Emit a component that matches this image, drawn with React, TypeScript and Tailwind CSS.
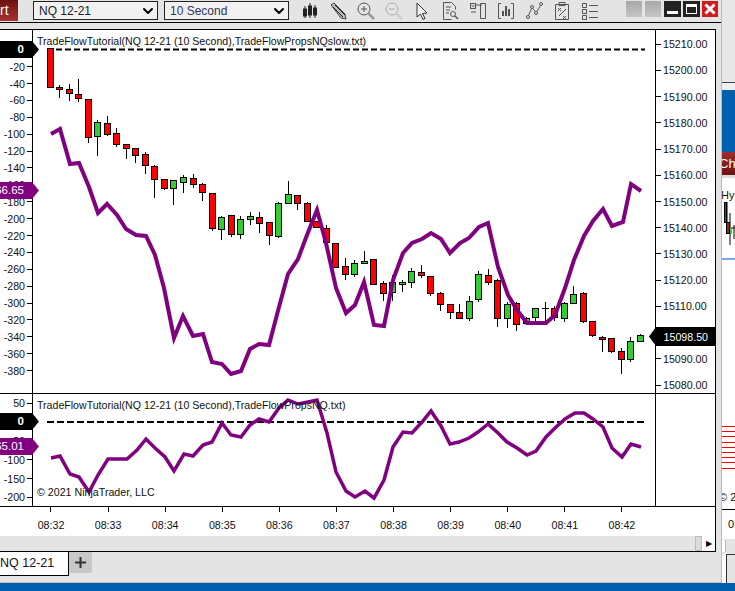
import type { ReactNode } from 'react';
import { ChevronDown } from 'lucide-react';

// [wickTop, bodyTop, bodyBottom, wickBottom, up]
const candles: [number, number, number, number, boolean][] = [
  [48, 48, 87, 87, false], [85, 87, 89, 98, false], [84, 89, 93, 101, false], [79, 94, 98, 102, false],
  [99, 99, 137, 143, false], [120, 122, 136, 156, true], [116, 123, 134, 136, false], [128, 133, 144, 147, false],
  [144, 144, 148, 159, false], [148, 148, 155, 163, false], [152, 154, 165, 174, false], [165, 166, 179, 198, false],
  [179, 179, 188, 190, false], [180, 180, 188, 205, true], [175, 177, 182, 193, true], [174, 178, 184, 188, false],
  [183, 184, 192, 201, false], [193, 193, 228, 231, false], [216, 217, 229, 240, true], [215, 215, 234, 237, false],
  [216, 219, 234, 239, true], [212, 216, 219, 225, true], [212, 217, 223, 233, false], [222, 222, 235, 245, false],
  [202, 203, 236, 238, true], [181, 194, 203, 204, true], [195, 195, 203, 210, false], [202, 203, 221, 222, false],
  [221, 221, 227, 228, false], [225, 228, 242, 243, false], [243, 243, 267, 268, false], [258, 266, 274, 280, false],
  [260, 263, 274, 277, true], [251, 261, 263, 264, true], [259, 259, 284, 284, false], [281, 283, 293, 301, false],
  [275, 282, 292, 301, true], [280, 282, 284, 292, true], [268, 271, 282, 288, true], [265, 272, 275, 278, false],
  [276, 276, 293, 296, false], [292, 293, 304, 311, false], [304, 304, 312, 319, false], [304, 312, 318, 318, false],
  [296, 301, 318, 321, true], [271, 274, 299, 302, true], [269, 275, 282, 285, false], [279, 280, 318, 327, false],
  [302, 304, 318, 328, true], [302, 303, 324, 331, false], [317, 318, 323, 325, true], [308, 308, 317, 325, true],
  [302, 308, 308, 321, true], [306, 308, 317, 321, false], [302, 303, 318, 322, true], [286, 294, 303, 304, true],
  [292, 293, 321, 323, false], [321, 321, 335, 337, false], [336, 337, 339, 352, false], [338, 338, 351, 353, false],
  [348, 351, 359, 374, false], [337, 341, 359, 362, true], [334, 335, 341, 341, true],
];

const slowLine =
  '51,134 60,129 70,164 79,163 89,187 98,213 107,204 117,215 126,229 136,235 146,236 155,255 164,288 174,338 183,316 193,336 203,334 212,362 222,364 231,374 241,371 250,349 259,344 269,345 279,307 288,274 298,259 307,235 317,210 326,243 336,288 346,313 355,305 364,282 374,325 384,326 393,280 403,253 412,243 422,239 431,233 441,239 450,253 460,243 469,238 479,227 488,223 498,267 508,295 517,310 527,323 537,323 546,323 555,315 565,288 574,260 584,236 593,221 603,209 612,226 623,222 631,184 641,191';

const fastLine =
  '51,458 60,456 70,474 79,477 89,492 98,475 108,459 117,459 127,459 137,450 146,439 155,448 165,457 174,471 184,454 193,456 203,445 212,442 222,423 231,435 241,437 250,425 259,419 269,422 279,408 288,400 298,404 308,402 317,400 327,433 336,472 346,491 355,497 365,491 374,498 384,480 393,447 403,432 412,433 422,422 431,411 441,426 450,444 459,442 469,438 478,432 488,424 498,433 507,442 517,448 527,455 536,451 546,437 555,428 565,419 575,413 584,413 593,419 603,427 612,448 622,457 631,444 641,447';

const priceLabels = ['15210.00', '15200.00', '15190.00', '15180.00', '15170.00', '15160.00', '15150.00', '15140.00', '15130.00', '15120.00', '15110.00', '15100.00', '15090.00', '15080.00'];
const leftLabels = ['0', '-20', '-40', '-60', '-80', '-100', '-120', '-140', '-160', '-180', '-200', '-220', '-240', '-260', '-280', '-300', '-320', '-340', '-360', '-380'];
const lowerLabels = ['50', '0', '-50', '-100', '-150', '-200'];
const times = ['08:32', '08:33', '08:34', '08:35', '08:36', '08:37', '08:38', '08:39', '08:40', '08:41', '08:42'];

function LeftMarker({ top, purple, children }: { top: string; purple?: boolean; children: ReactNode }) {
  return (
    <div
      className={`absolute left-0 w-[39px] h-[17px] flex items-center justify-end pr-[15px] text-white text-[11.5px] whitespace-nowrap [clip-path:polygon(0_0,32px_0,39px_50%,32px_100%,0_100%)] ${top} ${purple ? 'bg-[#800080]' : 'bg-black font-bold'}`}
    >
      {children}
    </div>
  );
}

function ToolIcon({ children }: { children: ReactNode }) {
  return (
    <div className="w-[28px] h-[22px] flex items-center justify-center shrink-0">
      <svg width="20" height="20" viewBox="0 0 20 20" fill="none" stroke="#555" strokeWidth="1">
        {children}
      </svg>
    </div>
  );
}

function Dropdown({ label, dark }: { label: string; dark?: boolean }) {
  return (
    <div className="w-[125px] h-[19px] border border-[#222] bg-[#f1f1f1] flex items-center justify-between pl-[5px] pr-[1px] shrink-0">
      <span className={`text-[12px] ${dark ? 'text-[#34345e]' : 'text-[#222]'}`}>{label}</span>
      <ChevronDown size={16} strokeWidth={3} className="text-black" />
    </div>
  );
}

function Toolbar() {
  return (
    <div className="h-[23px] border-b border-black flex items-start relative bg-[#e4e4e4]">
      <div className="w-[18px] h-[21px] bg-gradient-to-b from-[#6e1010] to-[#a83232] text-white text-[14px] leading-[21px] overflow-hidden shrink-0">
        rt
      </div>
      <div className="flex items-center gap-[6px] ml-[15px] mt-[1px]">
        <Dropdown label="NQ 12-21" />
        <Dropdown label="10 Second" dark />
      </div>
      <div className="flex ml-[7px]">
        <ToolIcon>
          <path d="M5 5v12M10 2v15M15 4v13" stroke="#222" />
          <rect x="3.5" y="8" width="3" height="7" fill="#222" stroke="#222" />
          <rect x="8.5" y="5" width="3" height="9" fill="#222" stroke="#222" />
          <rect x="13.5" y="7" width="3" height="7" fill="#222" stroke="#222" />
        </ToolIcon>
        <ToolIcon>
          <path d="M3 4l3-2 11 11 1 5-5-1z" fill="#bbb" stroke="#444" />
          <path d="M5 6l10 10M7 4l10 10" stroke="#222" />
        </ToolIcon>
        <ToolIcon>
          <circle cx="8" cy="8" r="6" />
          <path d="M5 8h6M8 5v6" />
          <path d="M12.5 12.5l5.5 5.5" stroke="#999" strokeWidth="2.5" />
        </ToolIcon>
        <ToolIcon>
          <circle cx="8" cy="8" r="6" stroke="#aaa" />
          <path d="M5 8h6" stroke="#aaa" />
          <path d="M12.5 12.5l5.5 5.5" stroke="#ccc" strokeWidth="2.5" />
        </ToolIcon>
        <ToolIcon>
          <path d="M5 2l0 14 3.5-3 2.5 5.5 2-1-2.5-5 4.5-.5z" stroke="#333" fill="#f4f4f4" />
        </ToolIcon>
        <ToolIcon>
          <path d="M3.5 1.5h8l4 4v3M3.5 1.5v17h8M6 6h5M6 9h4M6 12h3" />
          <circle cx="13" cy="13" r="2.5" />
          <path d="M15 15l3 3" strokeWidth="1.5" />
        </ToolIcon>
        <ToolIcon>
          <rect x="2.5" y="2.5" width="5" height="5" />
          <path d="M3.5 5h3M8 4h6M12.5 2.5h5v15h-5zM3 11h5" />
        </ToolIcon>
        <ToolIcon>
          <path d="M5 2.5H2.5v15H5M15 2.5h2.5v15H15" />
          <path d="M7 15v-5M10 15V5M13 15V8" strokeWidth="1.5" stroke="#222" />
        </ToolIcon>
        <ToolIcon>
          <circle cx="4" cy="16" r="1.5" />
          <circle cx="8" cy="6" r="1.5" />
          <circle cx="12" cy="12" r="1.5" />
          <circle cx="17" cy="3" r="1.5" />
          <path d="M4.5 14.5L7.5 7.5M9 7.5l2 3M13 10.5l3.5-6" />
        </ToolIcon>
        <ToolIcon>
          <path d="M3.5 3.5h13v15h-13zM7 1.5h6v3H7z" />
          <path d="M6 7l3 3M9 7l-3 3M11 15l3 3M14 15l-3 3M7 15l7-7" />
        </ToolIcon>
        <ToolIcon>
          <path d="M2.5 2.5h4v4h-4zM2.5 8.5h4v4h-4zM2.5 14.5h4v4h-4zM9 4.5h9M9 10.5h9M9 16.5h9" />
        </ToolIcon>
      </div>
      <div className="flex items-center gap-[2px] ml-auto mr-[3px] mt-[1px]">
        <div className="w-[16px] h-[16px] bg-gradient-to-b from-[#a8a8a8] to-[#c4c4c4] mr-[1px]" />
        <div className="w-[16px] h-[16px] bg-gradient-to-b from-[#a8a8a8] to-[#c4c4c4] mr-[1px]" />
        <div className="w-[17px] h-[16px] bg-[#222] flex items-end justify-center pb-[3px]">
          <div className="w-[11px] h-[3px] bg-white" />
        </div>
        <div className="w-[17px] h-[16px] bg-[#222] flex items-center justify-center">
          <div className="w-[11px] h-[10px] border border-white border-t-[3px]" />
        </div>
        <div className="w-[16px] h-[16px] bg-[#d01c1c] flex items-center justify-center">
          <svg width="12" height="12" viewBox="0 0 12 12" stroke="white" strokeWidth="3">
            <path d="M1.5 1.5l9 9M10.5 1.5l-9 9" />
          </svg>
        </div>
      </div>
    </div>
  );
}

function Candles() {
  return (
    <>
      {candles.map(([wt, top, bot, wb, up], i) => {
        const c = Math.floor(50.2 + 9.52 * i);
        if (top === bot) {
          return <path key={i} d={`M${c + 0.5} ${wt}V${wb}M${c - 3} ${top + 0.5}H${c + 4}`} stroke="black" fill="none" />;
        }
        return (
          <g key={i}>
            <path d={`M${c + 0.5} ${wt}V${wb}`} stroke="black" />
            <rect x={c - 2.5} y={top + 0.5} width={6} height={bot - top} fill={up ? '#32cd32' : '#ff0000'} stroke="black" />
          </g>
        );
      })}
    </>
  );
}

function TopPanel() {
  return (
    <div className="h-[364px] flex relative border-b border-black">
      <div className="w-[33px] border-r border-black shrink-0 pt-[11.3px] text-[10.67px] text-[#111]">
        {leftLabels.map((l) => (
          <div key={l} className="h-[16.9px] flex items-center justify-end">
            <span className="mr-[2px]">{l === '0' ? '' : l}</span>
            <div className="w-[5px] h-px bg-black" />
          </div>
        ))}
      </div>
      <div className="relative w-[622px] h-full overflow-hidden">
        <svg width="622" height="363" viewBox="33 30 622 363" className="block">
          <path d="M47 49.5H645" stroke="black" strokeWidth="2" strokeDasharray="6 3" />
          <Candles />
          <polyline points={slowLine} fill="none" stroke="#800080" strokeWidth="4" strokeLinejoin="miter" />
        </svg>
        <div className="absolute left-[4px] top-[4px] text-[10.6px] leading-[14px] text-[#111] whitespace-nowrap">
          TradeFlowTutorial(NQ 12-21 (10 Second),TradeFlowPropsNQslow.txt)
        </div>
      </div>
      <div className="flex-1 border-l border-black pt-[1.1px] text-[10.67px] text-[#111]">
        {priceLabels.map((p) => (
          <div key={p} className="h-[26.23px] flex items-center">
            <div className="w-[5px] h-px bg-black mr-[2px]" />
            {p}
          </div>
        ))}
      </div>
      <LeftMarker top="top-[11px]">0</LeftMarker>
      <LeftMarker top="top-[152px]" purple>66.65</LeftMarker>
      <div className="absolute left-[649px] top-[297px] w-[66px] h-[19px] bg-black text-white text-[10.67px] flex items-center justify-end pr-[7px] [clip-path:polygon(0_50%,7px_0,100%_0,100%_100%,7px_100%)]">
        15098.50
      </div>
    </div>
  );
}

function LowerPanel() {
  return (
    <div className="h-[113px] flex relative border-b border-black">
      <div className="w-[33px] border-r border-black shrink-0 text-[10.67px] text-[#111]">
        {lowerLabels.map((l) => (
          <div key={l} className="h-[18.8px] flex items-center justify-end">
            <span className="mr-[2px]">{l === '0' ? '' : l}</span>
            <div className="w-[5px] h-px bg-black" />
          </div>
        ))}
      </div>
      <div className="relative w-[622px] h-full overflow-hidden">
        <svg width="622" height="112" viewBox="33 394 622 112" className="block">
          <path d="M47 422H645" stroke="black" strokeWidth="2" strokeDasharray="7 3" />
          <polyline points={fastLine} fill="none" stroke="#800080" strokeWidth="3.5" strokeLinejoin="miter" />
        </svg>
        <div className="absolute left-[4px] top-[4px] text-[10.6px] leading-[14px] text-[#111] whitespace-nowrap">
          TradeFlowTutorial(NQ 12-21 (10 Second),TradeFlowPropsNQ.txt)
        </div>
        <div className="absolute left-[4px] bottom-[7px] text-[10.67px] leading-[14px] text-[#111] whitespace-nowrap">
          © 2021 NinjaTrader, LLC
        </div>
      </div>
      <div className="flex-1 border-l border-black" />
      <LeftMarker top="top-[19px]">0</LeftMarker>
      <LeftMarker top="top-[44px]" purple>65.01</LeftMarker>
    </div>
  );
}

function SidePanel() {
  return (
    <div className="flex-1 flex flex-col bg-white overflow-hidden whitespace-nowrap">
      <div className="h-[83px] bg-[#e8e8e8] border-b border-[#444] shrink-0" />
      <div className="h-[7px] bg-[#efefef] shrink-0" />
      <div className="h-[62px] bg-[#0060b0] shrink-0" />
      <div className="h-[23px] bg-gradient-to-b from-[#a02c2c] to-[#6e1212] text-white text-[13px] leading-[23px] -indent-[3px] shrink-0">Cha</div>
      <div className="h-[3px] bg-[#ddd] shrink-0" />
      <div className="h-[80px] text-[11px] leading-[14px] pt-[10px] -indent-[1px] shrink-0 text-[#111]">
        Hyp
        <svg width="13" height="50" viewBox="722 202 13 50" className="block">
          <path d="M727 200v30M730 213v32M734 225v14M731 228h4" stroke="black" />
          <rect x="724.5" y="202.5" width="2" height="20" fill="#ff0000" stroke="black" />
          <rect x="726.5" y="222.5" width="3" height="11" fill="#a02020" stroke="black" />
          <rect x="730" y="228" width="2" height="6" fill="#32cd32" />
        </svg>
      </div>
      <div className="h-[2px] bg-[#7aa7e8] shrink-0" />
      <div className="h-[166px] shrink-0" />
      <div className="flex flex-col gap-[4.2px] shrink-0">
        {[0, 1, 2, 3, 4, 5, 6, 7, 8].map((i) => (
          <div key={i} className="h-px bg-[#ff0000]" />
        ))}
      </div>
      <div className="h-[21px] shrink-0" />
      <div className="h-[14px] text-[11px] leading-[14px] -indent-[3px] text-[#111] shrink-0">© 2</div>
      <div className="h-[6px] border-b border-black shrink-0" />
      <div className="h-[29px] text-[11px] leading-[29px] text-right pr-[1px] text-[#111] shrink-0">0</div>
      <div className="h-[15px] bg-[#e4e4e4] shrink-0 flex pt-[1px]">
        <div className="w-[4px] h-[12px] bg-white border-r border-[#bbb]" />
      </div>
      <div className="flex-1 bg-[#e4e4e4] border-t border-[#333] ml-[4px] border-l" />
    </div>
  );
}

export default function App() {
  return (
    <div className="w-[735px] h-[591px] flex flex-col overflow-hidden bg-[#e4e4e4] font-['Liberation_Sans',Arial,sans-serif]">
      <div className="flex-1 flex min-h-0">
        <div className="w-[722px] flex flex-col bg-[#e4e4e4] border-r border-b border-[#bcbcbc] shrink-0">
          <Toolbar />
          <div className="h-[6px]" />
          <div className="w-[716px] h-[523px] border-t border-r border-b border-black flex flex-col bg-white">
            <TopPanel />
            <LowerPanel />
            <div className="h-[29px] flex pl-[22.45px] text-[10.67px] text-[#111] shrink-0">
              {times.map((t) => (
                <div key={t} className="w-[57.1px] flex flex-col items-center shrink-0">
                  <div className="w-px h-[5px] bg-black" />
                  <span className="mt-[5px]">{t}</span>
                </div>
              ))}
            </div>
            <div className="flex-1 bg-[#e4e4e4] flex justify-end items-stretch">
              <div className="w-[7px] bg-[#dcdcdc] border border-[#bbb]" />
              <div className="w-[13px] bg-white flex items-center justify-center text-[8px] text-black">▶</div>
            </div>
          </div>
          <div className="flex items-start">
            <div className="w-[69px] h-[24px] bg-white border-r border-b border-black text-[12.5px] leading-[23px] text-[#111] whitespace-nowrap overflow-hidden">
              NQ 12-21
            </div>
            <div className="w-[23px] h-[21px] bg-[#c8c8c8] flex items-center justify-center">
              <svg width="11" height="11" viewBox="0 0 11 11" stroke="#333" strokeWidth="2">
                <path d="M5.5 0v11M0 5.5h11" />
              </svg>
            </div>
          </div>
        </div>
        <SidePanel />
      </div>
      <div className="h-[8px] bg-[#0060b0] shrink-0" />
    </div>
  );
}
